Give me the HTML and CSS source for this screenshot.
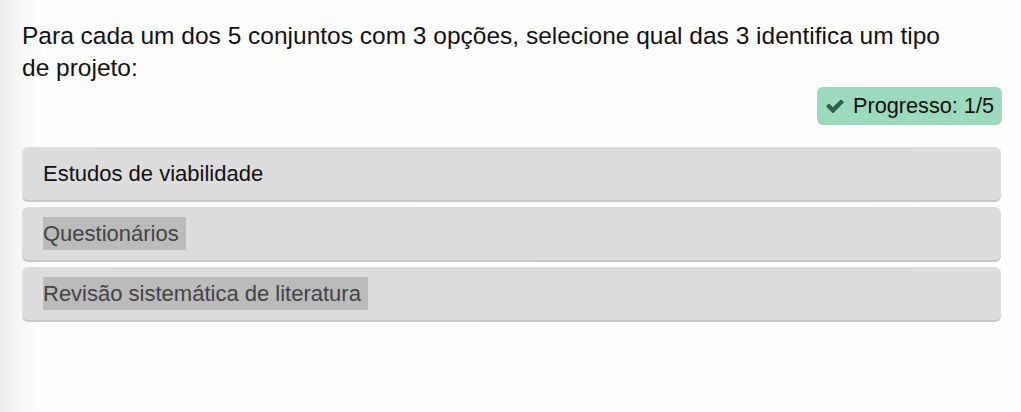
FILE: index.html
```html
<!DOCTYPE html>
<html lang="pt">
<head>
<meta charset="utf-8">
<link rel="stylesheet" href="styles.css">
</head>
<body>
<main class="quiz">
  <p class="prompt">Para cada um dos 5 conjuntos com 3 opções, selecione qual das 3 identifica um tipo de projeto:</p>
  <div class="status">
    <span class="badge">
      <svg class="check" viewBox="0 0 1792 1792" width="20" height="20" aria-hidden="true"><path d="M1671 566q0 40-28 68l-724 724-136 136q-28 28-68 28t-68-28l-136-136-362-362q-28-28-28-68t28-68l136-136q28-28 68-28t68 28l294 295 656-657q28-28 68-28t68 28l136 136q28 28 28 68z" fill="#2d5e48"/></svg>
      <span>Progresso: 1/5</span>
    </span>
  </div>
  <ul class="options">
    <li class="option">Estudos de viabilidade</li>
    <li class="option"><span class="mark">Questionários</span></li>
    <li class="option"><span class="mark">Revisão sistemática de literatura</span></li>
  </ul>
</main>
</body>
</html>
```
FILE: styles.css
```css
html, body {
  margin: 0;
  height: 100%;
}
body {
  background: linear-gradient(to right, #ebebeb 0px, #f6f6f6 18px, #fdfdfd 42px, #fefefe 100%);
  font-family: "Liberation Sans", Arial, sans-serif;
  color: #111;
}
.quiz {
  padding: 20px 20px 0 22px;
}
.prompt {
  margin: 0;
  font-size: 24.5px;
  line-height: 32px;
  max-width: 950px;
}
.status {
  display: flex;
  justify-content: flex-end;
  margin-top: 3px;
  margin-right: -1px;
}
.badge {
  display: inline-flex;
  align-items: center;
  gap: 8px;
  background: #9dd9bc;
  border-radius: 6px;
  padding: 0 8px 0 8px;
  height: 38px;
  font-size: 21.7px;
  color: #111;
}
.check {
  display: block;
}
.options {
  list-style: none;
  margin: 22px 0 0 0;
  padding: 0;
  display: flex;
  flex-direction: column;
  gap: 7px;
}
.option {
  background: #dddddd;
  border-radius: 6px;
  box-shadow: 0 2px 0 #c8c8c8;
  height: 53px;
  display: flex;
  align-items: center;
  padding-left: 21px;
  font-size: 22px;
  color: #111;
}
.mark {
  background: #bbbbbb;
  color: #444;
  padding: 4px 7px 4px 0;
  line-height: 25px;
}
```
